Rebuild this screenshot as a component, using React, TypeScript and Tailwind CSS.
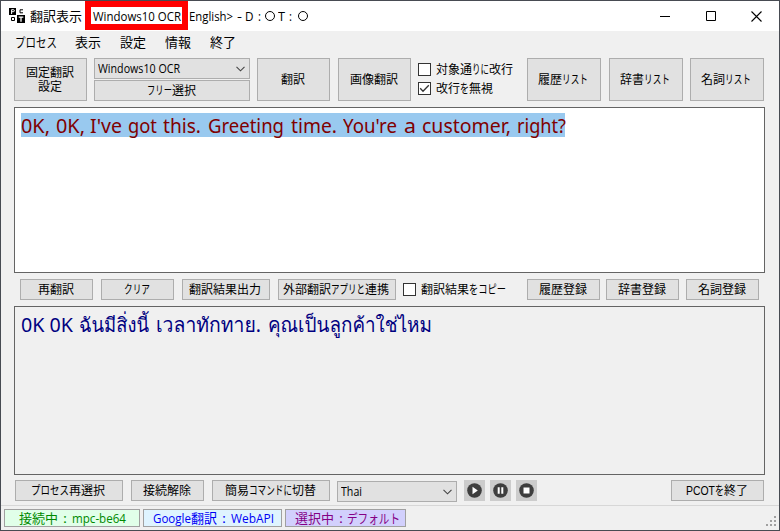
import React, { useLayoutEffect, useRef } from "react";

const GOTHIC = "font-['Liberation_Sans','Noto_Sans_CJK_JP',sans-serif] text-[12px]";
const UI = "font-['Open_Sans','Noto_Sans_CJK_JP',sans-serif]";

type Run = [text: string, width: number, gap?: number];

function Fit({ text, width, gap = 0 }: { text: string; width: number; gap?: number }) {
  const ref = useRef<HTMLSpanElement>(null);
  useLayoutEffect(() => {
    const el = ref.current;
    if (!el) return;
    const natural = el.getBoundingClientRect().width;
    if (natural > 0) el.style.transform = `scaleX(${width / natural})`;
  }, [text, width]);
  return (
    <span className="block shrink-0 whitespace-pre" style={{ width, marginLeft: gap }}>
      <span ref={ref} className="inline-block origin-left">{text}</span>
    </span>
  );
}

function Label({ runs, className = "" }: { runs: Run[]; className?: string }) {
  return (
    <span className={`flex leading-[14px] ${className}`}>
      {runs.map(([t, w, g], i) => <Fit key={i} text={t} width={w} gap={g} />)}
    </span>
  );
}

function Button({ lines, className }: { lines: Run[][]; className: string }) {
  return (
    <button className={`flex shrink-0 flex-col items-center justify-center border border-[#adadad] bg-[#e1e1e1] pt-px pr-[2px] text-black ${GOTHIC} ${className}`}>
      {lines.map((r, i) => <Label key={i} runs={r} />)}
    </button>
  );
}

function Combo({ run, className }: { run: Run; className: string }) {
  return (
    <div className={`flex h-[21px] shrink-0 items-center justify-between border border-[#adadad] bg-[#e1e1e1] pr-[4px] pl-[3px] text-[12px] text-black ${UI} ${className}`}>
      <Label runs={[run]} />
      <svg width="9" height="6" viewBox="0 0 9 6" fill="none" stroke="#444" strokeWidth="1.1"><path d="M.5 .8 4.5 4.8 8.5 .8" /></svg>
    </div>
  );
}

function Check({ checked, runs }: { checked?: boolean; runs: Run[] }) {
  return (
    <label className={`flex h-[13px] items-center text-black ${GOTHIC}`}>
      <span className="mr-[5px] flex h-[13px] w-[13px] items-center justify-center border border-[#333] bg-white">
        {checked && <svg width="11" height="11" viewBox="0 0 11 11" fill="none" stroke="#333" strokeWidth="1.3"><path d="M1.2 5.3 4 8.2 9.8 2.2" /></svg>}
      </span>
      <Label runs={runs} />
    </label>
  );
}

function Media({ children, className = "" }: { children: React.ReactNode; className?: string }) {
  return (
    <button className={`flex h-[21px] w-[21px] shrink-0 items-center justify-center bg-[#cccccc] ${className}`}>
      <svg width="15" height="15" viewBox="0 0 15 15"><circle cx="7.5" cy="7.5" r="7.3" fill="#3e3e3e" />{children}</svg>
    </button>
  );
}

function Status({ runs, className }: { runs: Run[]; className: string }) {
  return (
    <div className={`flex h-[18px] shrink-0 items-center border border-[#a0a0a0] text-[13px] ${UI} ${className}`}>
      <Label runs={runs} />
    </div>
  );
}

export default function App() {
  return (
    <div className="relative flex h-[531px] w-[780px] flex-col overflow-hidden border border-[#474b52] bg-[#f0f0f0]">
      <header className={`flex h-[30px] shrink-0 items-center bg-white text-[13px] text-black ${UI}`}>
        <svg className="ml-[8px]" width="16" height="16" viewBox="0 0 16 16">
          <rect width="7" height="7" />
          <rect x="8" y="7" width="8" height="8" />
          <path d="M2.6 6V1.7h1.7q1.1 0 1.1 1t-1.1 1H2.8" fill="none" stroke="#fff" strokeWidth="1" />
          <path d="M14 1.8h-3v3h3M2.5 9.5h3v3h-3z" fill="none" stroke="#000" strokeWidth="1" />
          <path d="M9.7 9.2h4.6M12 9.2v4.5" fill="none" stroke="#fff" strokeWidth="1.3" />
        </svg>
        <Label runs={[["翻訳表示", 52, 5], ["Windows10 OCR", 88, 10.5], ["English>", 44, 8.5], ["-", 5, 4], ["D", 8.5, 3], [":", 3, 4]]} />
        <span className="ml-[4px] h-[10px] w-[10px] rounded-full border border-black" />
        <Label runs={[["T", 7, 3], [":", 3, 4]]} />
        <span className="ml-[6px] h-[10px] w-[10px] rounded-full border border-black" />
        <div className="mr-[17px] ml-auto flex items-center gap-[35px]">
          <svg width="11" height="11" viewBox="0 0 11 11"><path d="M0 5.5h10" stroke="#000" /></svg>
          <svg width="10" height="10" viewBox="0 0 10 10"><path d="M.5.5h9v9h-9z" fill="none" stroke="#000" /></svg>
          <svg width="11" height="11" viewBox="0 0 11 11"><path d="m.5.5 10 10m0-10-10 10" fill="none" stroke="#000" strokeWidth="1.1" /></svg>
        </div>
      </header>
      <div className="absolute top-0 left-[84px] h-[29px] w-[103px] border-[6px] border-[#ff0000]" />

      <nav className={`flex h-[27px] shrink-0 items-center pb-[5px] pl-[14px] text-[13px] text-black ${UI}`}>
        <Label runs={[["プロセス", 42], ["表示", 26, 18], ["設定", 26, 19], ["情報", 26, 19], ["終了", 26, 19]]} />
      </nav>

      <section className="flex h-[43px] shrink-0 pl-[13px]">
        <Button className="h-[43px] w-[73px]" lines={[[["固定翻訳", 48]], [["設定", 24]]]} />
        <div className="ml-[7px] flex flex-col gap-px">
          <Combo className="w-[156px]" run={["Windows10 OCR", 82]} />
          <Button className="h-[21px] w-[156px]" lines={[[["フリー", 25], ["選択", 24]]]} />
        </div>
        <Button className="ml-[7px] h-[43px] w-[73px]" lines={[[["翻訳", 24]]]} />
        <Button className="ml-[8px] h-[43px] w-[73px]" lines={[[["画像翻訳", 48]]]} />
        <div className="ml-[7px] flex w-[109px] flex-col gap-[6px] pt-[5px]">
          <Check runs={[["対象通", 36], ["りに", 17], ["改行", 24]]} />
          <Check checked runs={[["改行", 24], ["を", 9], ["無視", 24]]} />
        </div>
        <Button className="h-[43px] w-[74px]" lines={[[["履歴", 24], ["リスト", 26]]]} />
        <Button className="ml-[8px] h-[43px] w-[74px]" lines={[[["辞書", 24], ["リスト", 26]]]} />
        <Button className="ml-[7px] h-[43px] w-[74px]" lines={[[["名詞", 24], ["リスト", 26]]]} />
      </section>

      <main className="mt-[6px] ml-[13px] h-[166px] w-[751px] shrink-0 border border-[#646464] bg-white pt-[5px] pl-[6px] font-['Noto_Sans',sans-serif] text-[20.5px] text-[#800000]">
        <div className="h-[24px] w-[544px] bg-[#99c9ef]">
          <Label
            className="leading-[24px]!"
            runs={[
              ["0K,", 29], ["0K,", 29, 6], ["I've", 32, 5], ["got", 29, 6], ["this.", 38, 6], ["Greeting", 76, 7],
              ["time.", 46, 6.5], ["You're", 54, 6.5], ["a", 12, 7], ["customer,", 89, 6], ["right?", 49, 6],
            ]}
          />
        </div>
      </main>

      <section className="mt-[6px] flex h-[21px] shrink-0 items-center pl-[19px]">
        <Button className="h-[21px] w-[73px]" lines={[[["再翻訳", 36]]]} />
        <Button className="ml-[8px] h-[21px] w-[73px]" lines={[[["クリア", 26]]]} />
        <Button className="ml-[8px] h-[21px] w-[88px]" lines={[[["翻訳結果出力", 72]]]} />
        <Button className="ml-[8px] h-[21px] w-[118px]" lines={[[["外部翻訳", 48], ["アプリと", 34], ["連携", 24]]]} />
        <div className="ml-[7px] w-[124px]">
          <Check runs={[["翻訳結果", 48], ["をコピー", 37]]} />
        </div>
        <Button className="h-[21px] w-[73px]" lines={[[["履歴登録", 48]]]} />
        <Button className="ml-[6px] h-[21px] w-[73px]" lines={[[["辞書登録", 48]]]} />
        <Button className="ml-[7px] h-[21px] w-[73px]" lines={[[["名詞登録", 48]]]} />
      </section>

      <div className="mt-[6px] ml-[13px] h-[169px] w-[751px] shrink-0 border border-[#646464] pt-[6px] pl-[6px] font-['Noto_Sans','Loma','Waree','Garuda','Noto_Sans_Thai_Looped','Noto_Looped_Thai','Noto_Sans_Thai',sans-serif] text-[20px] text-[#000080]">
        <Label className="leading-[24px]!" runs={[["0K 0K", 52], ["ฉันมีสิ่งนี้", 70, 6], ["เวลาทักทาย.", 105, 7], ["คุณเป็นลูกค้าใช่ไหม", 164, 7]]} />
      </div>

      <section className="mt-[5px] flex h-[22px] shrink-0 items-start pl-[14px]">
        <Button className="h-[21px] w-[108px]" lines={[[["プロセス", 38], ["再選択", 36]]]} />
        <Button className="ml-[8px] h-[21px] w-[73px]" lines={[[["接続解除", 48]]]} />
        <Button className="ml-[8px] h-[21px] w-[118px]" lines={[[["簡易", 24], ["コマンドに", 43], ["切替", 24]]]} />
        <Combo className="mt-px ml-[7px] w-[120px]" run={["Thai", 21]} />
        <Media className="ml-[7px]"><path d="M5.5 3.8v7.4l5.3-3.7z" fill="#fff" /></Media>
        <Media className="ml-[5px]"><path d="M4.7 4.3h2v6.4h-2zM8.3 4.3h2v6.4h-2z" fill="#fff" /></Media>
        <Media className="ml-[5px]"><path d="M4.5 4.5h6v6h-6z" fill="#fff" /></Media>
        <Button className="ml-[134px] h-[21px] w-[93px]" lines={[[["PCOT", 29], ["を", 9], ["終了", 24]]]} />
      </section>

      <footer className="mt-[3px] flex h-[25px] shrink-0 border-t border-[#d7d7d7] pt-[3px] pl-[3px]">
        <Status className="w-[136px] bg-[#e1ffe9] pl-[14px] text-[#008a00]" runs={[["接続中", 39], [":", 4, 5], ["mpc-be64", 54, 5]]} />
        <Status className="ml-[3px] w-[139px] bg-[#dff4ff] pl-[9px] text-[#0000f5]" runs={[["Google", 38], ["翻訳", 26], [":", 4, 5], ["WebAPI", 43, 5]]} />
        <Status className="ml-[3px] w-[121px] bg-[#d2d0fd] pl-[9px] text-[#850085]" runs={[["選択中", 39], [":", 4, 5], ["デフォルト", 53, 4]]} />
        <svg className="mt-[7px] mr-[2px] ml-auto" width="11" height="11" viewBox="0 0 11 11" fill="#a0a0a0">
          <path d="M8 0h2v2H8zM4 4h2v2H4zM8 4h2v2H8zM0 8h2v2H0zM4 8h2v2H4zM8 8h2v2H8z" />
        </svg>
      </footer>
    </div>
  );
}
